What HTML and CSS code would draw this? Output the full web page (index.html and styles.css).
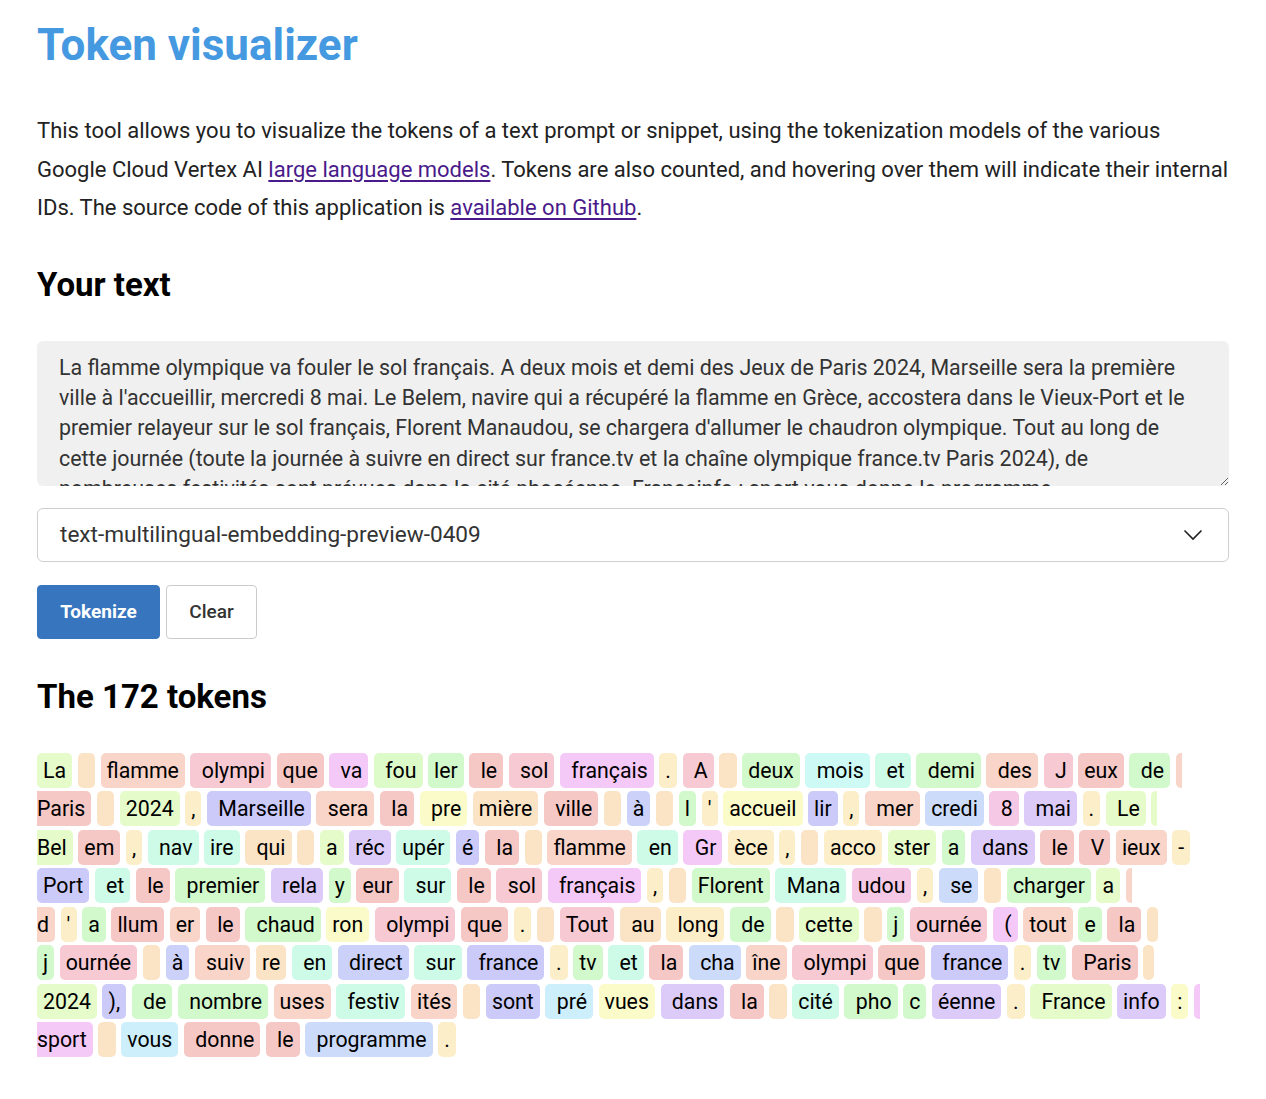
FILE: index.html
```html
<!DOCTYPE html>
<html lang="en">
<head>
<meta charset="utf-8">
<title>Token visualizer</title>
<link rel="stylesheet" href="styles.css">
</head>
<body>
<main class="page">
  <h1 class="title">Token visualizer</h1>
  <p class="intro">This tool allows you to visualize the tokens of a text prompt or snippet, using the tokenization models of the various Google Cloud Vertex AI <a href="#">large language models</a>. Tokens are also counted, and hovering over them will indicate their internal IDs. The source code of this application is <a href="#">available on Github</a>.</p>

  <h2 class="section-title">Your text</h2>
  <textarea class="prompt">La flamme olympique va fouler le sol français. A deux mois et demi des Jeux de Paris 2024, Marseille sera la première ville à l'accueillir, mercredi 8 mai. Le Belem, navire qui a récupéré la flamme en Grèce, accostera dans le Vieux-Port et le premier relayeur sur le sol français, Florent Manaudou, se chargera d'allumer le chaudron olympique. Tout au long de cette journée (toute la journée à suivre en direct sur france.tv et la chaîne olympique france.tv Paris 2024), de nombreuses festivités sont prévues dans la cité phocéenne. Franceinfo : sport vous donne le programme.</textarea>

  <div class="select">
    <span class="select-value">text-multilingual-embedding-preview-0409</span>
    <svg class="chevron" width="20" height="12" viewBox="0 0 20 12"><path d="M1.5 1.5 L10 10 L18.5 1.5" fill="none" stroke="#222" stroke-width="1.6"/></svg>
  </div>

  <div class="actions">
    <button class="btn btn-primary">Tokenize</button>
    <button class="btn btn-secondary">Clear</button>
  </div>

  <h2 class="section-title tokens-title">The 172 tokens</h2>

  <div class="tokens">
    <div class="row">
      <span class="t yg">La</span><span class="t pe"> </span><span class="t sa">flamme</span><span class="t ro"> olympi</span><span class="t re">que</span><span class="t ma"> va</span><span class="t pg"> fou</span><span class="t gr">ler</span><span class="t re"> le</span><span class="t ro"> sol</span><span class="t ma"> français</span><span class="t cr">.</span><span class="t ro"> A</span><span class="t pe"> </span><span class="t gr">deux</span><span class="t cy"> mois</span><span class="t mi"> et</span><span class="t gr"> demi</span><span class="t sa"> des</span><span class="t ro"> J</span><span class="t re">eux</span><span class="t gr"> de</span><span class="t sa frag"></span>
    </div>
    <div class="row">
      <span class="t re cont">Paris</span><span class="t pe"> </span><span class="t yg">2024</span><span class="t cr">,</span><span class="t pw"> Marseille</span><span class="t sa"> sera</span><span class="t re"> la</span><span class="t ly"> pre</span><span class="t pe">mière</span><span class="t re"> ville</span><span class="t pe"> </span><span class="t bp">à</span><span class="t pe"> </span><span class="t gr">l</span><span class="t cr">'</span><span class="t ly">accueil</span><span class="t pw">lir</span><span class="t cr">,</span><span class="t sa"> mer</span><span class="t bl">credi</span><span class="t pk"> 8</span><span class="t la"> mai</span><span class="t cr">.</span><span class="t yg"> Le</span><span class="t yg frag"></span>
    </div>
    <div class="row">
      <span class="t yg cont">Bel</span><span class="t re">em</span><span class="t cr">,</span><span class="t mi"> nav</span><span class="t mi">ire</span><span class="t pe"> qui</span><span class="t pe"> </span><span class="t yg">a</span><span class="t la">réc</span><span class="t mi">upér</span><span class="t pw">é</span><span class="t re"> la</span><span class="t pe"> </span><span class="t sa">flamme</span><span class="t mi"> en</span><span class="t ma"> Gr</span><span class="t cr">èce</span><span class="t cr">,</span><span class="t pe"> </span><span class="t cr">acco</span><span class="t yg">ster</span><span class="t gr">a</span><span class="t la"> dans</span><span class="t re"> le</span><span class="t re"> V</span><span class="t sa">ieux</span><span class="t cr">-</span>
    </div>
    <div class="row">
      <span class="t pw">Port</span><span class="t mi"> et</span><span class="t re"> le</span><span class="t gr"> premier</span><span class="t la"> rela</span><span class="t gr">y</span><span class="t re">eur</span><span class="t mi"> sur</span><span class="t re"> le</span><span class="t ro"> sol</span><span class="t ma"> français</span><span class="t cr">,</span><span class="t pe"> </span><span class="t gr">Florent</span><span class="t mi"> Mana</span><span class="t pk">udou</span><span class="t cr">,</span><span class="t bl"> se</span><span class="t pe"> </span><span class="t gr">charger</span><span class="t yg">a</span><span class="t sa frag"></span>
    </div>
    <div class="row">
      <span class="t sa cont">d</span><span class="t cr">'</span><span class="t gr">a</span><span class="t re">llum</span><span class="t sa">er</span><span class="t re"> le</span><span class="t gr"> chaud</span><span class="t ly">ron</span><span class="t ro"> olympi</span><span class="t re">que</span><span class="t cr">.</span><span class="t pe"> </span><span class="t ro">Tout</span><span class="t pe"> au</span><span class="t cr"> long</span><span class="t gr"> de</span><span class="t pe"> </span><span class="t yg">cette</span><span class="t pe"> </span><span class="t gr">j</span><span class="t ro">ournée</span><span class="t ma"> (</span><span class="t sa">tout</span><span class="t gr">e</span><span class="t re"> la</span><span class="t pe endblank"></span>
    </div>
    <div class="row">
      <span class="t gr">j</span><span class="t ro">ournée</span><span class="t pe"> </span><span class="t bp">à</span><span class="t sa"> suiv</span><span class="t pe">re</span><span class="t mi"> en</span><span class="t bp"> direct</span><span class="t mi"> sur</span><span class="t pw"> france</span><span class="t cr">.</span><span class="t gr">tv</span><span class="t mi"> et</span><span class="t re"> la</span><span class="t bl"> cha</span><span class="t sa">îne</span><span class="t ro"> olympi</span><span class="t re">que</span><span class="t pw"> france</span><span class="t cr">.</span><span class="t gr">tv</span><span class="t re"> Paris</span><span class="t pe endblank"></span>
    </div>
    <div class="row">
      <span class="t yg">2024</span><span class="t pw">),</span><span class="t gr"> de</span><span class="t gr"> nombre</span><span class="t sa">uses</span><span class="t mi"> festiv</span><span class="t sa">ités</span><span class="t pe"> </span><span class="t pw">sont</span><span class="t sk"> pré</span><span class="t ly">vues</span><span class="t la"> dans</span><span class="t re"> la</span><span class="t pe"> </span><span class="t mi">cité</span><span class="t gr"> pho</span><span class="t gr">c</span><span class="t la">éenne</span><span class="t cr">.</span><span class="t yg"> France</span><span class="t la">info</span><span class="t ly">:</span><span class="t ma frag"></span>
    </div>
    <div class="row">
      <span class="t ma cont">sport</span><span class="t pe"> </span><span class="t sk">vous</span><span class="t re"> donne</span><span class="t re"> le</span><span class="t bl"> programme</span><span class="t cr">.</span>
    </div>
  </div>
</main>
</body>
</html>
```

FILE: styles.css
```css
html, body {
  margin: 0;
  padding: 0;
  background: #ffffff;
}

body {
  font-family: Roboto, "Noto Sans", sans-serif;
  color: #1f1f1f;
}

.page {
  padding: 0 37px 40px;
  display: flex;
  flex-direction: column;
  align-items: stretch;
}

.title {
  margin: 17px 0 0;
  font-size: 44px;
  line-height: 56px;
  font-weight: 700;
  color: #4599e0;
}

.intro {
  margin: 39px 0 0;
  font-size: 22px;
  line-height: 38.5px;
  color: #222;
}

.intro a {
  color: #4a1a8a;
  text-decoration: underline;
  text-underline-offset: 3px;
}

.section-title {
  margin: 38px 0 0;
  font-size: 33px;
  line-height: 37px;
  font-weight: 700;
  color: #000;
}

.prompt {
  margin-top: 38px;
  box-sizing: border-box;
  height: 145px;
  width: 100%;
  padding: 12px 22px;
  border: none;
  border-radius: 6px;
  background: #f0f0f0;
  font-family: Roboto, "Noto Sans", sans-serif;
  font-size: 21.4px;
  line-height: 30.4px;
  color: #333;
  resize: vertical;
  outline: none;
}

.select {
  margin-top: 22px;
  box-sizing: border-box;
  height: 54px;
  border: 1px solid #cfcfcf;
  border-radius: 6px;
  display: flex;
  align-items: center;
  justify-content: space-between;
  padding: 0 25px 0 22px;
  font-size: 22.6px;
  color: #333;
}

.chevron {
  display: block;
}

.actions {
  margin-top: 23px;
  display: flex;
  gap: 6px;
}

.btn {
  box-sizing: border-box;
  height: 54px;
  border-radius: 4px;
  font-family: Roboto, "Noto Sans", sans-serif;
  font-size: 19px;
  padding: 0;
  cursor: pointer;
}

.btn-primary {
  width: 123px;
  background: #3776be;
  border: 1px solid #3776be;
  color: #fff;
  font-weight: 700;
}

.btn-secondary {
  width: 91px;
  background: #fff;
  border: 1px solid #cccccc;
  color: #333;
  font-weight: 500;
}

.tokens-title {
  margin-top: 39px;
}

.tokens {
  margin-top: 38px;
  display: flex;
  flex-direction: column;
  gap: 3.5px;
}

.row {
  display: flex;
  gap: 5.6px;
}

.t {
  display: block;
  height: 35px;
  line-height: 35px;
  padding: 0 6px;
  min-width: 4px;
  border-radius: 5px;
  font-size: 21.3px;
  white-space: pre;
  color: #000;
}

.t.cont {
  padding-left: 0;
  border-top-left-radius: 0;
  border-bottom-left-radius: 0;
}

.t.frag {
  width: 6px;
  padding: 0;
  min-width: 0;
  border-top-right-radius: 0;
  border-bottom-right-radius: 0;
}

.t.endblank {
  width: 11px;
  padding: 0;
  min-width: 0;
}

.yg { background: #e5fbc9; }
.pe { background: #fbe4c6; }
.sa { background: #f8d4c9; }
.ro { background: #f6c9d3; }
.re { background: #f5c7c5; }
.ma { background: #f5c9f7; }
.pg { background: #dcfbc9; }
.gr { background: #d2f9cb; }
.cr { background: #fbeec9; }
.cy { background: #cdfaf5; }
.mi { background: #cdfbe8; }
.bl { background: #cbdbf9; }
.bp { background: #cbd1f9; }
.pw { background: #cbcaf9; }
.la { background: #dccbf9; }
.ly { background: #fbfbc9; }
.pk { background: #f5c9e5; }
.sk { background: #cdeffb; }
```
